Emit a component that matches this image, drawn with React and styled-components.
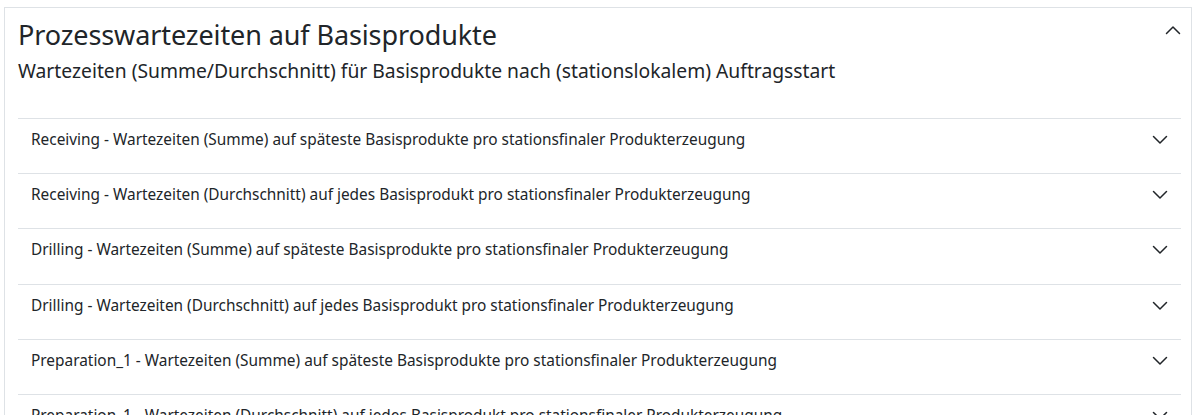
import React from "react";
import styled, { createGlobalStyle } from "styled-components";

const GlobalStyle = createGlobalStyle`
  body {
    margin: 0;
    background: #fff;
    font-family: "Noto Sans", "Open Sans", sans-serif;
    color: #212529;
  }
`;

const rows = [
  "Receiving - Wartezeiten (Summe) auf späteste Basisprodukte pro stationsfinaler Produkterzeugung",
  "Receiving - Wartezeiten (Durchschnitt) auf jedes Basisprodukt pro stationsfinaler Produkterzeugung",
  "Drilling - Wartezeiten (Summe) auf späteste Basisprodukte pro stationsfinaler Produkterzeugung",
  "Drilling - Wartezeiten (Durchschnitt) auf jedes Basisprodukt pro stationsfinaler Produkterzeugung",
  "Preparation_1 - Wartezeiten (Summe) auf späteste Basisprodukte pro stationsfinaler Produkterzeugung",
  "Preparation_1 - Wartezeiten (Durchschnitt) auf jedes Basisprodukt pro stationsfinaler Produkterzeugung",
];

// chevron like bootstrap-icons, 14x7
const Chevron = ({ up }) => (
  <svg width="16" height="16" viewBox="0 0 16 16" fill="none">
    <path
      d={up ? "M1.5 11.5 L8 5 L14.5 11.5" : "M1.5 4.5 L8 11 L14.5 4.5"}
      stroke="#212529"
      strokeWidth="1.5"
      strokeLinecap="round"
      strokeLinejoin="round"
    />
  </svg>
);

const App = () => {
  return (
    <Page>
      <GlobalStyle />
      <Card>
        <Header>
          <div>
            <Title>Prozesswartezeiten auf Basisprodukte</Title>
            <Subtitle>Wartezeiten (Summe/Durchschnitt) für Basisprodukte nach (stationslokalem) Auftragsstart</Subtitle>
          </div>
          <Toggle>
            <Chevron up />
          </Toggle>
        </Header>
        <List>
          {rows.map((r) => (
            <Row key={r}>
              <RowHead>
                <RowText>{r}</RowText>
                <Chevron />
              </RowHead>
            </Row>
          ))}
        </List>
      </Card>
    </Page>
  );
};

export default App;

const Page = styled.div`
  padding: 7px 4px 0 4px;
  height: 415px;
  overflow: hidden;
  box-sizing: border-box;
`;

const Card = styled.div`
  border: 1px solid #dee2e6;
  border-bottom: none;
  padding: 0 10px 0 13px;
`;

const Header = styled.div`
  display: flex;
  justify-content: space-between;
  align-items: flex-start;
  padding-top: 10px;
  padding-bottom: 35px;
`;

const Title = styled.h2`
  margin: 0;
  font-size: 27px;
  font-weight: 400;
  line-height: 34px;
  letter-spacing: -0.1px;
`;

const Subtitle = styled.h5`
  margin: 7px 0 0 0;
  font-size: 19.3px;
  font-weight: 400;
  line-height: 24px;
`;

const Toggle = styled.div`
  padding-top: 4px;
  line-height: 0;
`;

const List = styled.div`
  display: flex;
  flex-direction: column;
`;

const Row = styled.div`
  height: 55.2px;
  box-sizing: border-box;
  border-top: 1px solid #dee2e6;
  padding: 10px 13px 0 13px;
`;

const RowHead = styled.div`
  display: flex;
  align-items: center;
  justify-content: space-between;
  line-height: 22px;
`;

const RowText = styled.span`
  font-size: 15.4px;
`;
